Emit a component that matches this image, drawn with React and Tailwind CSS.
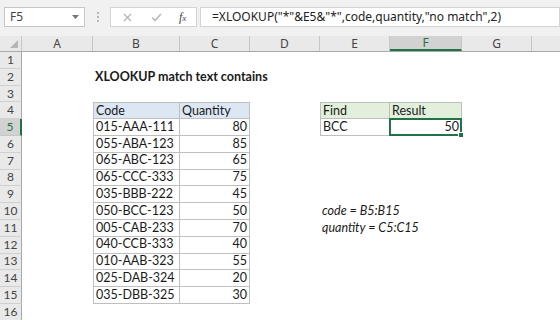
import React from 'react';

const cols = [
  { key: 'A', w: 71 },
  { key: 'B', w: 87 },
  { key: 'C', w: 70 },
  { key: 'D', w: 70 },
  { key: 'E', w: 70 },
  { key: 'F', w: 72 },
  { key: 'G', w: 70 },
  { key: 'H', w: 60, label: '' },
];

const data = [
  ['015-AAA-111', 80],
  ['055-ABA-123', 85],
  ['065-ABC-123', 65],
  ['065-CCC-333', 75],
  ['035-BBB-222', 45],
  ['050-BCC-123', 50],
  ['005-CAB-233', 70],
  ['040-CCB-333', 40],
  ['010-AAB-323', 55],
  ['025-DAB-324', 20],
  ['035-DBB-325', 30],
];

function cellFor(r, c) {
  // returns { text, cls } for a sheet cell
  const grid = 'border-[#bfbfbf]';
  if (c === 'B' && r === 2) {
    return { text: 'XLOOKUP match text contains', cls: 'font-bold whitespace-nowrap overflow-visible' };
  }
  if (r === 4 && c === 'B') return { text: 'Code', cls: `bg-[#dde7f4] border-t border-l border-r border-b ${grid}` };
  if (r === 4 && c === 'C') return { text: 'Quantity', cls: `bg-[#dde7f4] border-t border-r border-b ${grid}` };
  if (r >= 5 && r <= 15 && c === 'B') return { text: data[r - 5][0], cls: `border-l border-r border-b ${grid}` };
  if (r >= 5 && r <= 15 && c === 'C') return { text: data[r - 5][1], cls: `justify-end border-r border-b ${grid}` };
  if (r === 4 && c === 'E') return { text: 'Find', cls: `bg-[#e2efda] border-t border-l border-r border-b ${grid}` };
  if (r === 4 && c === 'F') return { text: 'Result', cls: `bg-[#e2efda] border-t border-r border-b ${grid}` };
  if (r === 5 && c === 'E') return { text: 'BCC', cls: `border-l border-r border-b ${grid}` };
  if (r === 5 && c === 'F') return { text: '50', cls: `justify-end border-r border-b ${grid}`, selected: true };
  if (r === 10 && c === 'E') return { text: 'code = B5:B15', cls: 'italic whitespace-nowrap overflow-visible' };
  if (r === 11 && c === 'E') return { text: 'quantity = C5:C15', cls: 'italic whitespace-nowrap overflow-visible' };
  return { text: '', cls: '' };
}

export default function App() {
  const rows = Array.from({ length: 16 }, (_, i) => i + 1);

  return (
    <div className="w-[560px] h-[320px] overflow-hidden bg-white font-['Lato',sans-serif] text-[#1a1a1a]">
      {/* Formula bar */}
      <div className="h-[36px] bg-[#f1f1f1] flex items-start pt-[7px]">
        <div className="ml-[4px] w-[81px] h-[20px] bg-white border border-[#c6c6c6] flex items-center justify-between pl-[5px] pr-[5px]">
          <span className="text-[12px] text-[#444] font-['Noto_Sans',sans-serif]">F5</span>
          <svg width="7" height="4" viewBox="0 0 7 4"><path d="M0 0H7L3.5 4Z" fill="#777" /></svg>
        </div>
        <div className="w-[25px] h-[20px] flex flex-col items-center justify-center gap-[2px]">
          <span className="w-[2px] h-[2px] bg-[#b8b8b8]" />
          <span className="w-[2px] h-[2px] bg-[#b8b8b8]" />
          <span className="w-[2px] h-[2px] bg-[#b8b8b8]" />
        </div>
        <div className="w-[87px] h-[20px] bg-white border border-[#d4d4d4] flex items-center">
          <svg className="ml-[12px]" width="9" height="9" viewBox="0 0 9 9">
            <path d="M1 1L8 8M8 1L1 8" stroke="#b3b3b3" strokeWidth="1.2" fill="none" />
          </svg>
          <svg className="ml-[19px]" width="11" height="9" viewBox="0 0 11 9">
            <path d="M1 4.5L4 7.5L10 1" stroke="#b3b3b3" strokeWidth="1.3" fill="none" />
          </svg>
          <span className="ml-[17px] text-[12px] italic font-['Liberation_Serif',serif] text-[#444] leading-none">
            f<span className="text-[9px]">x</span>
          </span>
        </div>
        <div className="ml-[3px] flex-1 h-[20px] bg-white border border-[#d4d4d4] flex items-center pl-[11px]">
          <span className="text-[12px] text-[#222] font-['Noto_Sans',sans-serif] whitespace-nowrap">
            =XLOOKUP("*"&amp;E5&amp;"*",code,quantity,"no match",2)
          </span>
        </div>
      </div>

      {/* Column headers */}
      <div className="h-[16px] flex bg-[#e9e9e9] border-b border-[#a8a8a8]">
        <div className="w-[22px] shrink-0 border-r border-[#c6c6c6] relative">
          <svg className="absolute right-[3px] bottom-[3px]" width="8" height="8" viewBox="0 0 8 8">
            <path d="M8 0V8H0Z" fill="#b6b6b6" />
          </svg>
        </div>
        {cols.map((c) => (
          <div
            key={c.key}
            style={{ width: c.w }}
            className={
              c.key === 'F'
                ? 'shrink-0 flex items-center justify-center text-[12px] text-[#217346] bg-[#d2d2d2] border-r border-[#c6c6c6] border-b-2 border-b-[#217346] font-["Noto_Sans",sans-serif]'
                : 'shrink-0 flex items-center justify-center text-[12px] text-[#444] border-r border-[#c6c6c6] font-["Noto_Sans",sans-serif]'
            }
          >
            {c.label ?? c.key}
          </div>
        ))}
      </div>

      {/* Sheet rows */}
      {rows.map((r) => (
        <div key={r} className="h-[16.8px] flex">
          <div
            className={
              r === 5
                ? 'w-[22px] shrink-0 bg-[#d2d2d2] border-r-2 border-[#217346] border-b border-b-[#c6c6c6] flex items-center justify-center text-[12px] text-[#217346]'
                : 'w-[22px] shrink-0 bg-[#e9e9e9] border-r border-[#a8a8a8] border-b border-b-[#d0d0d0] flex items-center justify-center text-[12px] text-[#444]'
            }
          >
            {r}
          </div>
          {cols.map((c) => {
            const cell = cellFor(r, c.key);
            return (
              <div
                key={c.key}
                style={{ width: c.w }}
                className={`shrink-0 relative flex items-center px-[2px] text-[12.5px] leading-none ${cell.cls}`}
              >
                {cell.text}
                {cell.selected && (
                  <>
                    <div className="absolute -top-px -left-px -right-px -bottom-px border-2 border-[#217346]" />
                    <div className="absolute -right-[3px] -bottom-[3px] w-[6px] h-[6px] bg-[#217346] border border-white" />
                  </>
                )}
              </div>
            );
          })}
        </div>
      ))}
    </div>
  );
}
